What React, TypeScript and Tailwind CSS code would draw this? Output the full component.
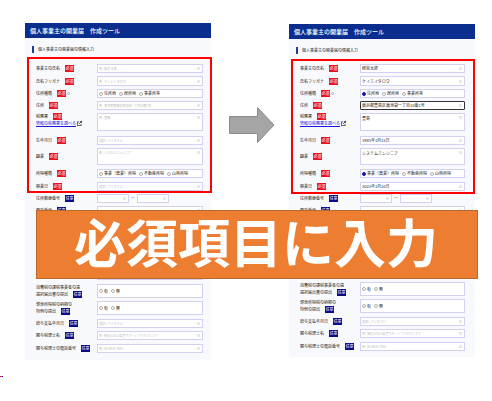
import { Fragment } from 'react'
import { clsx } from 'clsx'

type Row = {
    id: string
    label: string[]
    optional?: boolean
    help?: boolean
    link?: string
    kind: 'text' | 'area' | 'radio' | 'zip'
    placeholder?: string
    value?: string
    options?: string[]
    focus?: boolean
    size: string
}

const required: Row[] = [
    {id: 'name', label: ['事業主の氏名'], kind: 'text', placeholder: '例 : 経営 太郎', value: '経営太郎', size: 'h-[9px]'},
    {id: 'kana', label: ['氏名フリガナ'], kind: 'text', placeholder: '例 : ケイエイ タロウ', value: 'ケイエイタロウ', size: 'mt-[3px] h-[10px]'},
    {id: 'addressType', label: ['住所種類'], help: true, kind: 'radio', options: ['住所地', '居所地', '事業所等'], size: 'mt-[3px] h-[9px]'},
    {id: 'address', label: ['住所'], kind: 'text', placeholder: '例 : 東京都豊島区東池袋一丁目10番1号', value: '東京都豊島区東池袋一丁目10番1号', focus: true, size: 'mt-[3px] h-[9px]'},
    {id: 'office', label: ['税務署'], link: '管轄の税務署を調べる', kind: 'area', placeholder: '例 : 豊島', value: '豊島', size: 'mt-[3px] h-[18px]'},
    {id: 'birth', label: ['生年月日'], kind: 'text', placeholder: '選択してください', value: '1985年1月15日', size: 'mt-[5px] h-[9px]'},
    {id: 'job', label: ['職業'], kind: 'area', placeholder: '例 : システムエンジニア', value: 'システムエンジニア', size: 'mt-[3px] h-[17px]'},
    {id: 'income', label: ['所得種類'], kind: 'radio', options: ['事業（農業）所得', '不動産所得', '山林所得'], size: 'mt-[4px] h-[9px]'},
    {id: 'open', label: ['開業日'], kind: 'text', placeholder: '選択してください', value: '2023年1月10日', size: 'mt-[4px] h-[9px]'},
]

const optionalTop: Row[] = [
    {id: 'zip', label: ['住所郵便番号'], optional: true, kind: 'zip', size: 'h-[9px]'},
    {id: 'phone', label: ['電話番号'], optional: true, kind: 'text', size: 'mt-[3px] h-[9px]'},
]

const optionalBottom: Row[] = [
    {id: 'shop', label: ['屋号'], optional: true, kind: 'text', size: 'h-[9px]'},
    {id: 'consumption', label: ['消費税の課税事業者の選', '選択届出書の提出'], optional: true, kind: 'radio', options: ['有', '無'], size: 'mt-[4px] h-[14px]'},
    {id: 'withholding', label: ['源泉所得税の納期の', '特例の提出'], optional: true, kind: 'radio', options: ['有', '無'], size: 'mt-[3px] h-[14px]'},
    {id: 'salary', label: ['給与支払年月日'], optional: true, kind: 'text', placeholder: '選択してください', size: 'mt-[4px] h-[9px]'},
    {id: 'accountant', label: ['関与税理士名'], optional: true, kind: 'text', placeholder: '例 : 税理士法人経営サポートプラスアルファ', size: 'mt-[3px] h-[9px]'},
    {id: 'accountantPhone', label: ['関与税理士の電話番号'], optional: true, kind: 'text', placeholder: '例 : 03-6914-7088', size: 'mt-[4px] h-[9px]'},
]

const inputClass = 'min-w-0 flex-1 bg-transparent pl-[1px] outline-none resize-none placeholder:text-[3px] placeholder:text-[#b9b9b9]'

function Dots(){
    return <span className="mr-[2px] h-[3px] w-[3px] shrink-0 rounded-[1px] border border-[#dcdce2]" />
}

function Badge({optional}: {optional?: boolean}){
    return (
        <span className={clsx('inline-block h-[7px] w-[9px] shrink-0 text-center leading-[7px] text-white', optional ? 'bg-[#0a0a8c]' : 'bg-[#e8101c]')}>
            {optional ? '任意' : '必須'}
        </span>
    )
}

function Field({row, id, filled}: {row: Row, id: string, filled: boolean}){
    const value = filled ? row.value : undefined
    const box = clsx('flex min-w-0 flex-1 border bg-white', filled && row.focus ? 'rounded-[1px] border-[#333333]' : 'border-[#d3d0f2]')

    if (row.kind === 'radio') {
        return (
            <div role="radiogroup" aria-label={row.label.join('')} className={clsx(box, 'items-center gap-[3px] pl-[1px]')}>
                {row.options?.map((option, i) => (
                    <label key={option} className="flex items-center gap-[1px] whitespace-nowrap">
                        <input
                            type="radio"
                            name={id}
                            defaultChecked={filled && !row.optional && i === 0}
                            className="h-[4px] w-[4px] appearance-none rounded-full border border-[#b0b0b0] bg-white checked:border-[#1c1c9c] checked:bg-[#1c1c9c]"
                        />
                        {option}
                    </label>
                ))}
            </div>
        )
    }
    if (row.kind === 'zip') {
        return (
            <div className="flex min-w-0 flex-1 items-stretch">
                <div className="flex w-[32px] items-center border border-[#d3d0f2] bg-white">
                    <input id={id} className={inputClass} />
                    <Dots />
                </div>
                <span className="w-[8px] text-center leading-[8px]">ー</span>
                <div className="flex w-[32px] items-center border border-[#d3d0f2] bg-white">
                    <input aria-label="住所郵便番号" className={inputClass} />
                    <Dots />
                </div>
            </div>
        )
    }
    if (row.kind === 'area') {
        return (
            <div className={box}>
                <textarea id={id} rows={1} placeholder={row.placeholder} defaultValue={value} className={clsx(inputClass, 'pt-[1px] leading-[6px]')} />
                <span className="pt-[2px]"><span className="flex"><Dots /></span></span>
            </div>
        )
    }
    return (
        <div className={clsx(box, 'items-center')}>
            <input id={id} placeholder={row.placeholder} defaultValue={value} className={inputClass} />
            <Dots />
        </div>
    )
}

function FormRow({row, panel, filled}: {row: Row, panel: string, filled: boolean}){
    const id = panel + '-' + row.id
    return (
        <div className={clsx('flex', row.size)}>
            <div className={clsx('flex shrink-0 flex-col whitespace-nowrap', filled ? 'w-[60px]' : 'w-[61px]', row.link ? 'justify-start' : 'justify-center')}>
                <div className="flex items-end">
                    <label htmlFor={row.kind === 'radio' ? undefined : id} className="leading-[7px]">
                        {row.label.map((line, i) => (
                            <Fragment key={line}>
                                {i > 0 && <br />}
                                {line}
                                {row.label.length > 1 && i === row.label.length - 1 && <span className="ml-[5px]"><Badge optional={row.optional} /></span>}
                            </Fragment>
                        ))}
                    </label>
                    {row.label.length === 1 && <span className="ml-[5px] flex"><Badge optional={row.optional} /></span>}
                    {row.help && <span className="mb-[2px] ml-[1px] h-[3px] w-[3px] rounded-full border border-[#a8a8a8]" />}
                </div>
                {row.link && (
                    <a href="#" className="flex items-center gap-[1px] leading-[7px] text-[#1a1ae0] underline">
                        {row.link}
                        <svg viewBox="0 0 12 12" className="h-[5px] w-[5px]" fill="none" stroke="#222222" strokeWidth="1.8">
                            <path d="M5 2H1v9h9V7M7 1h4v4M11 1L5 7" />
                        </svg>
                    </a>
                )}
            </div>
            <Field row={row} id={id} filled={filled} />
        </div>
    )
}

function FormPanel({panel, filled}: {panel: string, filled: boolean}){
    const rows = (list: Row[]) => list.map(row => <FormRow key={row.id} row={row} panel={panel} filled={filled} />)
    return (
        <form className={clsx('min-w-0 flex-1 bg-[#f7f9fc] text-[4px] leading-[7px] text-[#222222]', filled ? 'mt-[1px] pb-[6px]' : 'pb-[7px]')}>
            <h1 className="h-[15px] whitespace-nowrap bg-[#0b2d8e] pl-[5px] text-[6px] font-medium leading-[15px] text-white">個人事業主の開業届　作成ツール</h1>
            <h2 className="ml-[7px] mt-[8px] flex h-[7px] items-center border-l-2 border-[#1c3d9c] pl-[4px] text-[4px]">個人事業主の開業届の情報入力</h2>
            <div className={clsx('ml-[2px] border-2 border-[#ff0000] pl-[7px]', filled ? 'mt-[5px] pb-[1px] pr-[8px] pt-[3px]' : '-mr-[1px] mt-[4px] pr-[7px] pt-[5px]')}>
                {rows(required)}
            </div>
            <div className={clsx('pl-[11px]', filled ? 'pr-[10px]' : 'pr-[8px] pt-[1px]')}>
                {rows(optionalTop)}
                <div className={filled ? 'h-[54px]' : 'h-[56px]'} />
                {rows(optionalBottom)}
            </div>
        </form>
    )
}

export default function App(){
    return (
        <main lang="ja" className="relative bg-white pb-[24px] pl-[25px] pr-[17px] pt-[23px] font-['Noto_Sans_CJK_JP',sans-serif]">
            <div className="flex items-start">
                <FormPanel panel="before" filled={false} />
                <div className="flex w-[78px] shrink-0 justify-center pl-[3px] pt-[84px]">
                    <svg viewBox="0 0 46 36" className="h-[36px] w-[46px]" fill="#a5a5a5" stroke="#8a8a8a">
                        <path d="M.5 9.500H28.500V.5L45 18L28.500 35.500V26.500H.5Z" />
                    </svg>
                </div>
                <FormPanel panel="after" filled={true} />
            </div>
            <div className="absolute left-[36px] right-[14px] top-[210px] flex h-[69px] items-center border border-[#b9692f] bg-[#ed7d31] pb-[8px] pl-[37px]">
                <p className="whitespace-nowrap text-[52px] font-bold leading-[60px] text-white">必須項目に入力</p>
            </div>
            <div className="absolute left-0 top-[376px] flex h-[1px]">
                <span className="w-[1px] bg-[#ff0000]" />
                <span className="w-[1px] bg-[#00c040]" />
                <span className="w-[1px] bg-[#0000ff]" />
            </div>
        </main>
    )
}
